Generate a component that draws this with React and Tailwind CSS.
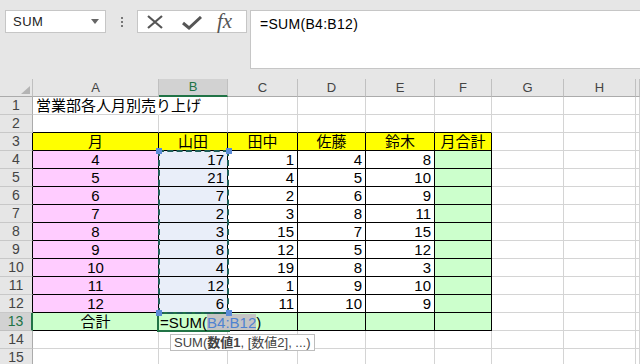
const B = [17, 21, 7, 2, 3, 8, 4, 12, 6];
const C = [1, 4, 2, 3, 15, 12, 19, 1, 11];
const D = [4, 5, 6, 8, 7, 5, 8, 9, 10];
const E = [8, 10, 9, 11, 15, 12, 3, 10, 9];
const letters = ["A", "B", "C", "D", "E", "F", "G", "H", ""];

function buildRows() {
    const rows = [];
    for (let r = 1; r <= 15; r++) {
        const row = [];
        for (let c = 0; c < 9; c++) row.push({ t: "", align: "center", bg: "white" });
        if (r === 1) row[0] = { t: "営業部各人月別売り上げ", align: "left", bg: "white" };
        if (r === 3) {
            ["月", "山田", "田中", "佐藤", "鈴木", "月合計"].forEach((t, i) => {
                row[i] = { t, align: "center", bg: "yellow" };
            });
        }
        if (r >= 4 && r <= 12) {
            const i = r - 4;
            row[0] = { t: r, align: "center", bg: "pink" };
            row[1] = { t: B[i], align: "right", bg: "blue" };
            row[2] = { t: C[i], align: "right", bg: "white" };
            row[3] = { t: D[i], align: "right", bg: "white" };
            row[4] = { t: E[i], align: "right", bg: "white" };
            row[5] = { t: "", align: "right", bg: "green" };
        }
        if (r === 13) {
            row[0] = { t: "合計", align: "center", bg: "green" };
            for (let c = 1; c <= 5; c++) row[c] = { t: "", align: "center", bg: "green" };
        }
        rows.push(row);
    }
    return rows;
}

function Cell({ r, c, cell }) {
    const inTable = r >= 3 && r <= 13 && c <= 5;
    let right = inTable ? "border-r-black" : "border-r-[#d4d4d4]";
    if (r === 1 && c === 0) right = "border-r-white";
    const bottom = inTable || (r === 2 && c <= 5) ? "border-b-black" : "border-b-[#d4d4d4]";
    const bg =
        cell.bg === "yellow" ? "bg-[#ffff00]" :
        cell.bg === "pink" ? "bg-[#ffccff]" :
        cell.bg === "green" ? "bg-[#ccffcc]" :
        cell.bg === "blue" ? "bg-[#e9eef9]" : "bg-white";
    const align =
        cell.align === "left" ? "justify-start pl-[3px]" :
        cell.align === "right" ? "justify-end pr-[3px]" : "justify-center";
    return (
        <div className={`relative flex items-center border-r border-b ${right} ${bottom} ${bg} ${align} text-[15px] text-black whitespace-nowrap overflow-visible leading-none`}>
            <span className={r === 1 && c === 0 ? "relative z-10" : ""}>{cell.t}</span>
        </div>
    );
}

export default function App() {
    const rows = buildRows();

    return (
        <div className="w-[640px] h-[364px] overflow-hidden bg-white font-['Liberation_Sans','Noto_Sans_CJK_JP',sans-serif]">
            {/* formula bar */}
            <div className="h-[79px] bg-[#e6e6e6] flex items-start pt-[10px] pl-[5px]">
                <div className="w-[101px] h-[23px] bg-white border border-[#c6c6c6] flex items-center justify-between pl-[7px] pr-[6px]">
                    <span className="text-[13px] text-[#222] tracking-[0.5px]">SUM</span>
                    <svg width="8" height="5" viewBox="0 0 8 5"><path d="M0 0h8L4 5z" fill="#666" /></svg>
                </div>
                <div className="w-[31px] h-[23px] flex flex-col items-center justify-center gap-[2px]">
                    <div className="w-[2px] h-[2px] bg-[#777]" />
                    <div className="w-[2px] h-[2px] bg-[#777]" />
                    <div className="w-[2px] h-[2px] bg-[#777]" />
                </div>
                <div className="w-[110px] h-[23px] bg-white border border-[#c6c6c6] flex items-center">
                    <svg className="ml-[8px]" width="18" height="14" viewBox="0 0 18 14">
                        <path d="M2 1l14 12M16 1L2 13" stroke="#555" strokeWidth="2.2" fill="none" />
                    </svg>
                    <svg className="ml-[18px] mt-[3px]" width="20" height="14" viewBox="0 0 20 14">
                        <path d="M1 7l6 5L19 1" stroke="#555" strokeWidth="3" fill="none" />
                    </svg>
                    <span className="ml-[15px] font-['Liberation_Serif',serif] italic text-[21px] text-[#555] leading-none">fx</span>
                </div>
                <div className="ml-[3px] flex-1 h-[59px] bg-white border-l border-t border-b border-[#c6c6c6] pl-[9px] pt-[3px] text-[14px] text-black tracking-[0.3px]">
                    =SUM(B4:B12)
                </div>
            </div>

            {/* sheet */}
            <div className="relative">
                <div className="grid grid-cols-[33px_126px_69px_70px_68px_69px_57px_72px_72px_1fr] auto-rows-[18px]">
                    {/* header row */}
                    <div className="relative bg-[#e6e6e6] border-r border-b border-r-[#c0c0c0] border-b-[#ababab]">
                        <svg className="absolute left-[21px] top-[7px]" width="9" height="8" viewBox="0 0 9 8"><path d="M9 0v8H0z" fill="#b4b4b4" /></svg>
                    </div>
                    {letters.map((l, i) =>
                        i === 1 ? (
                            <div key={i} className="flex items-center justify-center bg-[#d2d2d2] border-r border-r-[#c0c0c0] border-b-2 border-b-[#217346] text-[13px] text-[#217346]">{l}</div>
                        ) : (
                            <div key={i} className="flex items-center justify-center bg-[#e6e6e6] border-r border-b border-r-[#c0c0c0] border-b-[#ababab] text-[13px] text-[#444]">{l}</div>
                        )
                    )}

                    {rows.map((row, ri) => {
                        const r = ri + 1;
                        const head =
                            r === 13 ? (
                                <div key={`h${r}`} className="flex items-center justify-center bg-[#d2d2d2] border-r-2 border-b border-r-[#217346] border-b-[#c0c0c0] text-[14px] text-[#217346]">{r}</div>
                            ) : (
                                <div key={`h${r}`} className={`flex items-center justify-center bg-[#e6e6e6] border-r border-b border-b-[#c8c8c8] ${r >= 3 && r <= 12 ? "border-r-black" : "border-r-[#ababab]"} text-[14px] text-[#444]`}>{r}</div>
                            );
                        return [head, ...row.map((cell, c) => <Cell key={`${r}-${c}`} r={r} c={c} cell={cell} />)];
                    })}
                </div>

                {/* active cell B13 with edit text */}
                <div className="absolute left-[157px] top-[233px] w-[73px] h-[20px] border-l-2 border-t-2 border-b-2 border-[#217346] z-20">
                    <div className="absolute left-[1px] top-0 h-[16px] pr-[3px] bg-[#ccffcc] flex items-center whitespace-nowrap text-[15px] text-black leading-none">
                        =SUM(<span className="bg-[#c4c4c4] text-[#4f83d1] h-full flex items-center">B4:B12</span>)
                    </div>
                </div>

                {/* reference range B4:B12 */}
                <div className="absolute left-[158px] top-[71px] w-[71px] h-[164px] border-[2px] border-dashed border-[#1f5f58] z-30 pointer-events-none" />
                <div className="absolute left-[156px] top-[69px] w-[6px] h-[6px] bg-[#5b8bd8] z-40" />
                <div className="absolute left-[226px] top-[69px] w-[6px] h-[6px] bg-[#5b8bd8] z-40" />
                <div className="absolute left-[156px] top-[231px] w-[6px] h-[6px] bg-[#5b8bd8] z-40" />
                <div className="absolute left-[226px] top-[231px] w-[6px] h-[6px] bg-[#5b8bd8] z-40" />

                {/* function tooltip */}
                <div className="absolute left-[170px] top-[255px] h-[17px] px-[3px] bg-white border border-[#bdbdbd] flex items-center whitespace-nowrap text-[13px] text-[#444] z-40 leading-none">
                    SUM(<span className="font-bold">数値1</span>, [数値2], ...)
                </div>
            </div>
        </div>
    );
}
